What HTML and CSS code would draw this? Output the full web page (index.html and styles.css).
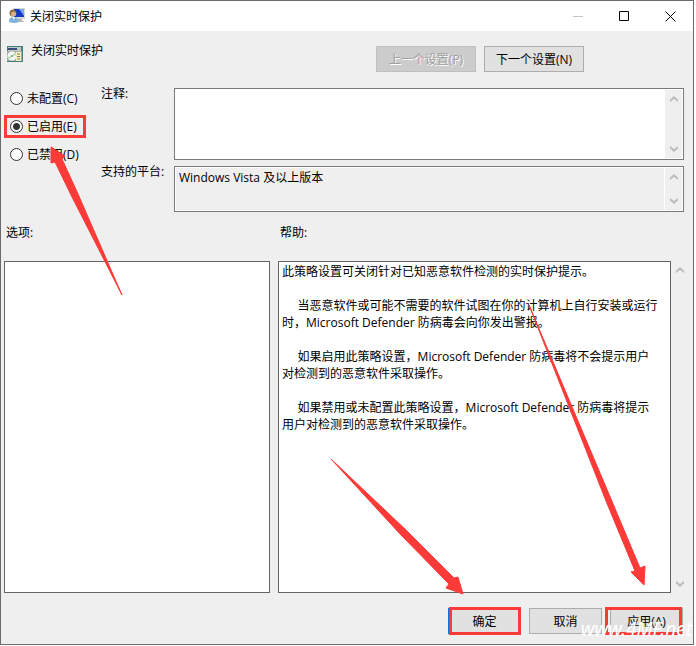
FILE: index.html
```html
<!DOCTYPE html>
<html lang="zh-CN">
<head>
    <meta charset="utf-8">
    <title>关闭实时保护</title>
    <link rel="stylesheet" href="styles.css">
</head>
<body>
    <svg class="symbols" aria-hidden="true">
        <symbol id="chevron-up" viewBox="0 0 8 6"><path d="M0 6V3.500L4 0L8 3.500V6L4 3Z"/></symbol>
        <symbol id="chevron-down" viewBox="0 0 8 6"><path d="M0 0V2.500L4 6L8 2.500V0L4 3Z"/></symbol>
    </svg>

    <form class="dialog" onsubmit="return false">
        <header class="titlebar">
            <svg class="icon" viewBox="0 0 16 16" aria-hidden="true">
                <rect x="4" y="0" width="12" height="11" fill="#d5d9d2"/>
                <rect x="5" y="1" width="10" height="8" fill="#1238c8"/>
                <path d="M10 1h5v7z" fill="#7fa6f0"/>
                <path d="M9 11h4v2h2v1H8z" fill="#b3b7ae"/>
                <circle cx="4" cy="5" r="3.500" fill="#8a6a45"/>
                <circle cx="4.500" cy="6" r="2.500" fill="#d9b08c"/>
                <path d="M0 14c0-4 2-5 4-5s6 1 6 5q-5 2-10 0z" fill="#7fb2dc"/>
                <path d="M3 9l2 3 1-3z" fill="#eef6fc"/>
            </svg>
            <span class="caption">关闭实时保护</span>
            <button type="button" class="window-button minimize" aria-label="最小化" disabled>
                <svg viewBox="0 0 11 11"><path d="M0 5.500H10"/></svg>
            </button>
            <button type="button" class="window-button" aria-label="最大化">
                <svg viewBox="0 0 11 11"><path d="M.5 .5h9v9h-9z"/></svg>
            </button>
            <button type="button" class="window-button" aria-label="关闭">
                <svg viewBox="0 0 11 11"><path d="M.5 .5l10 10M10.500 .5l-10 10"/></svg>
            </button>
        </header>

        <div class="heading">
            <svg class="icon" viewBox="0 0 16 16" aria-hidden="true">
                <rect width="16" height="16" fill="#3f7f7d"/>
                <rect x="1" y="1" width="13" height="4" fill="#c9c9c4"/>
                <rect x="1" y="2" width="9" height="2" fill="#3c4a78"/>
                <rect x="0" y="5" width="15" height="10" fill="#a9aea9"/>
                <circle cx="5" cy="10" r="4.500" fill="#f4f7f2"/>
                <circle cx="5" cy="10" r="1" fill="#6d8a78"/>
                <path d="M5 10l3-3 1 2z" fill="#9fd49a"/>
                <path d="M5 10l-3 3-1-2z" fill="#9fd49a"/>
                <rect x="9" y="6" width="5" height="9" fill="#f7efc6"/>
                <path d="M10 8h3M10 10.500h3M10 13h3" stroke="#8b7a52"/>
            </svg>
            <span class="policy-name">关闭实时保护</span>
            <button type="button" class="button nav-button" disabled>上一个设置(P)</button>
            <button type="button" class="button nav-button">下一个设置(N)</button>
        </div>

        <div class="settings">
            <div class="states">
                <label class="state"><input type="radio" name="state">未配置(C)</label>
                <label class="state marked"><input type="radio" name="state" checked>已启用(E)</label>
                <label class="state"><input type="radio" name="state">已禁用(D)</label>
            </div>
            <div class="fields">
                <label class="field-label" for="comment">注释:</label>
                <div class="box comment">
                    <textarea id="comment"></textarea>
                    <div class="scrollbar">
                        <svg><use href="#chevron-up"/></svg>
                        <svg><use href="#chevron-down"/></svg>
                    </div>
                </div>
                <label class="field-label" for="platform">支持的平台:</label>
                <div class="box platform">
                    <textarea id="platform" readonly>Windows Vista 及以上版本</textarea>
                    <div class="scrollbar">
                        <svg><use href="#chevron-up"/></svg>
                        <svg><use href="#chevron-down"/></svg>
                    </div>
                </div>
            </div>
        </div>

        <div class="panels">
            <div class="panel">
                <h2>选项:</h2>
                <div class="options"></div>
            </div>
            <div class="panel">
                <label for="help">帮助:</label>
                <div class="help">
                    <textarea id="help" readonly>此策略设置可关闭针对已知恶意软件检测的实时保护提示。

     当恶意软件或可能不需要的软件试图在你的计算机上自行安装或运行时，Microsoft Defender 防病毒会向你发出警报。

     如果启用此策略设置，Microsoft Defender 防病毒将不会提示用户对检测到的恶意软件采取操作。

     如果禁用或未配置此策略设置，Microsoft Defender 防病毒将提示用户对检测到的恶意软件采取操作。</textarea>
                    <div class="scrollbar">
                        <svg><use href="#chevron-up"/></svg>
                        <svg><use href="#chevron-down"/></svg>
                    </div>
                </div>
            </div>
        </div>

        <footer class="actions">
            <button type="submit" class="button default marked">确定</button>
            <button type="button" class="button">取消</button>
            <button type="button" class="button marked apply">应用(A)</button>
        </footer>
    </form>

    <svg class="arrows" viewBox="0 0 696 646" aria-hidden="true">
        <path d="M122 295L78 194L62 159L65 156L51 147L51 163L55 162L72 197Z"/>
        <path d="M331 459L406 530L454 578L458 577L463 594L446 588L449 584L401 535Z"/>
        <path d="M529 305L611 499L640 568L645 566L644 585L631 572L635 571L606 501Z"/>
    </svg>
    <div class="watermark">www.4MF.net</div>
</body>
</html>
```

FILE: styles.css
```css
* {
    box-sizing: border-box;
}
body {
    margin: 0;
    background: #fff;
    color: #000;
    font: 12px/17px "Open Sans", "Noto Sans CJK SC", sans-serif;
}
button, input, textarea {
    font: inherit;
    color: inherit;
}
.symbols {
    display: none;
}
.dialog {
    display: flex;
    flex-direction: column;
    height: calc(100vh - 1px);
    margin-right: 2px;
    border: 1px solid #6b6b6b;
    background: #efefef;
}
.icon {
    width: 16px;
    height: 16px;
}

/* title bar */
.titlebar {
    display: flex;
    align-items: center;
    height: 30px;
    padding-left: 8px;
    background: #fff;
}
.caption {
    flex: 1;
    margin-left: 5px;
}
.window-button {
    display: flex;
    align-items: center;
    justify-content: center;
    width: 46px;
    height: 28px;
    padding: 0;
    border: none;
    background: none;
}
.window-button svg {
    width: 11px;
    height: 11px;
    fill: none;
    stroke: #000;
}
.minimize svg {
    stroke: #c4c4c4;
}

/* policy name and navigation */
.heading {
    display: flex;
    gap: 8px;
    padding: 15px 109px 0 6px;
}
.policy-name {
    flex: 1;
    margin-top: -4px;
}
.button {
    position: relative;
    width: 73px;
    height: 26px;
    padding: 0;
    border: 1px solid #adadad;
    background: #e1e1e1;
}
.nav-button {
    width: 100px;
}
.button:disabled {
    border-color: #bfbfbf;
    background: #ccc;
    color: #a0a0a0;
    text-shadow: 1px 1px #fff;
}
.button.default {
    border: 2px solid #0078d7;
}

/* state and fields */
.settings {
    display: flex;
    padding: 16px 9px 0 5px;
}
.states {
    display: flex;
    flex-direction: column;
    gap: 11px;
    width: 95px;
    padding-top: 2px;
}
.state {
    position: relative;
    display: flex;
    align-items: center;
    align-self: flex-start;
    gap: 4px;
    padding: 0 4px;
}
.state input {
    appearance: none;
    width: 13px;
    height: 13px;
    margin: 0;
    border: 1px solid #333;
    border-radius: 50%;
    background: #fff;
}
.state input:checked {
    background: radial-gradient(circle, #333 3px, #fff 4px);
}
.fields {
    flex: 1;
    display: grid;
    grid-template-columns: 73px 1fr;
    row-gap: 6px;
}
.field-label {
    margin-top: -3px;
}
.box {
    display: flex;
    padding: 1px;
    border: 1px solid #7a7a7a;
    background: #fff;
}
.comment {
    height: 72px;
}
.platform {
    height: 46px;
}
textarea {
    flex: 1;
    min-width: 0;
    padding: 1px 3px;
    border: none;
    outline: none;
    resize: none;
    overflow: hidden;
    background: #fff;
}
.platform textarea {
    margin-right: 1px;
    background: #efefef;
}
.scrollbar {
    display: flex;
    flex-direction: column;
    justify-content: space-between;
    align-items: center;
    width: 17px;
    padding: 6px 0;
    background: #efefef;
}
.scrollbar svg {
    width: 8px;
    height: 6px;
    fill: #bdbdbd;
}

/* options and help */
.panels {
    flex: 1;
    display: grid;
    grid-template-columns: 266fr 410fr;
    gap: 8px;
    padding: 12px 5px 0 3px;
}
.panel {
    display: flex;
    flex-direction: column;
    gap: 20px;
}
.panel h2, .panel label {
    margin: 0;
    padding-left: 2px;
    font-size: 12px;
    font-weight: normal;
}
.options {
    flex: 1;
    border: 1px solid #646464;
    background: #fff;
}
.help {
    flex: 1;
    display: flex;
}
.help textarea {
    padding: 1px 10px 1px 3px;
    border: 1px solid #646464;
}

/* bottom buttons */
.actions {
    display: flex;
    justify-content: flex-end;
    gap: 8px;
    padding: 15px 10px 10px;
}

/* red marks drawn over the dialog */
.marked::after {
    content: "";
    position: absolute;
    inset: -3px -5px -3px -2px;
    border: 3px solid #fc3a38;
}
.button.marked::after {
    inset: -3px -2px -3px -1px;
}
.button.apply::after {
    inset: -2px 0 -2px -6px;
}
.arrows {
    position: absolute;
    top: 0;
    left: 0;
    width: 696px;
    height: 646px;
    fill: #fc3a38;
    stroke: #fc3a38;
    stroke-linejoin: round;
    pointer-events: none;
}
.watermark {
    position: absolute;
    right: 4px;
    bottom: 7px;
    color: #fff;
    font: italic 19px/20px "Noto Sans", sans-serif;
    pointer-events: none;
}
```
